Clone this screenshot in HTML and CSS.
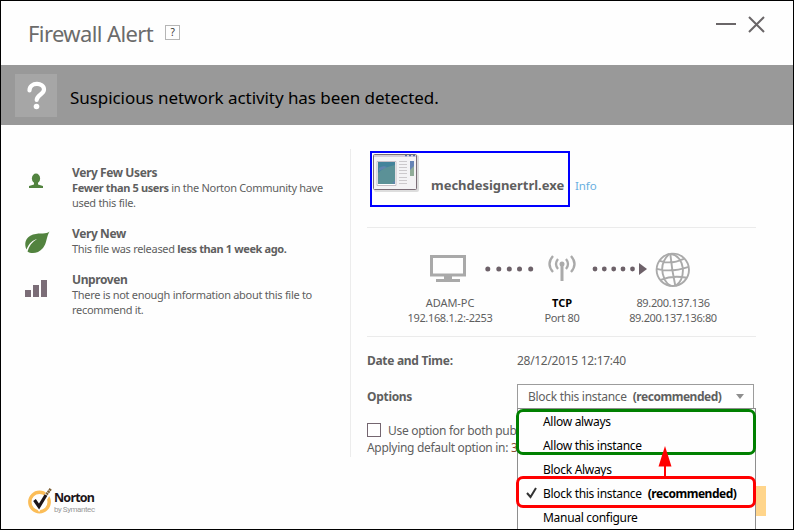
FILE: index.html
```html
<!DOCTYPE html>
<html lang="en">
<head>
<meta charset="utf-8">
<title>Firewall Alert</title>
<link rel="stylesheet" href="styles.css">
</head>
<body>
<main class="window">
  <header class="titlebar">
    <h1 class="title">Firewall Alert</h1>
    <span class="help">?</span>
    <svg class="controls" width="50" height="20" viewBox="0 0 50 20"><path d="M0 9h20" stroke="#6a6668" stroke-width="2"/><path d="M33 2l15 15M48 2l-15 15" stroke="#6a6668" stroke-width="2"/></svg>
  </header>
  <section class="banner">
    <div class="banner-icon"><svg width="42" height="43" viewBox="0 0 42 43"><path d="M14.500 16.500C14.500 7.800 29 7.800 29 15.500C29 20.500 22 20.500 21.700 26" fill="none" stroke="#fff" stroke-width="4.200" stroke-linecap="round"/><circle cx="21.500" cy="32.500" r="2.800" fill="#fff"/></svg></div>
    <p class="banner-text">Suspicious network activity has been detected.</p>
  </section>
  <div class="content">
    <section class="left">
      <article class="fact">
        <svg class="fact-icon" width="26" height="45" viewBox="0 0 26 45"><ellipse cx="12" cy="13.500" rx="4.100" ry="5" fill="#52833f"/><path d="M10 17h4v2.500l5 1.600V23H5v-1.900l5-1.600z" fill="#52833f"/></svg>
        <div><h2>Very Few Users</h2><p><b>Fewer than 5 users</b> in the Norton Community have<br>used this file.</p></div>
      </article>
      <article class="fact">
        <svg class="fact-icon" width="26" height="30" viewBox="0 0 26 30"><path d="M25.500 5.500C22 8.500 17 6.500 9 8.500C1 11 0 18 2.500 23.500C5 17 9 14 13 13C8 16 5 20 3.500 25.500C7 28 14 28 19 22C23 17 22 12 25.500 5.500z" fill="#52833f"/></svg>
        <div><h2>Very New</h2><p>This file was released <b>less than 1 week ago.</b></p></div>
      </article>
      <article class="fact">
        <svg class="fact-icon" width="26" height="45" viewBox="0 0 26 45"><path d="M1 18h6v7H1zM9 13h6v12H9zM17 8h6v17h-6z" fill="#7b6d77"/></svg>
        <div><h2>Unproven</h2><p>There is not enough information about this file to<br>recommend it.</p></div>
      </article>
    </section>
    <section class="right">
      <div class="program">
        <div class="program-box">
          <svg class="app-icon" width="47" height="39" viewBox="0 0 47 39">
            <rect x="2" y="2" width="45" height="37" rx="2" fill="#ddd"/>
            <rect x="1.500" y="1.500" width="43" height="35" rx="1" fill="#f4f3f5" stroke="#7b6d77"/>
            <path d="M2 2h42v2H2z" fill="#d5d0d8"/><path d="M33 2.500h2m2 0h2m2 0h2" stroke="#536da8" stroke-width="1.500"/>
            <path d="M5 8.500h19v24H5z" fill="#fff" stroke="#c6bfc6"/><path d="M6 9h17v22H6z" fill="#43839b"/><path d="M6 20L12 15l11-3v19H6z" fill="#5b9197"/><path d="M7 15q4-3 8-1l-8 4zM20 30l3-2v3z" fill="#6183af"/>
            <path d="M27 8.500h8m-8 3h8m-8 3h8m-8 3h8m-8 3h8m-8 4h8m-8 3h8m-8 3h8" stroke="#ccc9cc"/><path d="M38 8h4v15h-4z" fill="#91ac98"/><path d="M38 8h4v5l-4 4z" fill="#6684b5"/>
          </svg>
          <strong>mechdesignertrl.exe</strong>
        </div>
        <a class="info">Info</a>
      </div>
      <div class="network">
        <div class="node pc">
          <svg width="40" height="35" viewBox="0 0 40 35"><path d="M1.500 4.500h33v18.500h-33z" fill="none" stroke="#a9a9a9" stroke-width="3"/><path d="M14 24h8v3h8v3H6v-3h8z" fill="#a9a9a9"/></svg>
          <span>ADAM-PC</span><span class="ip">192.168.1.2:-2253</span>
        </div>
        <svg class="dots" width="50" height="14" viewBox="0 0 50 14"><g fill="#6d6169"><circle cx="2.800" cy="7" r="2.500"/><circle cx="13.800" cy="7" r="2.500"/><circle cx="24.300" cy="7" r="2.500"/><circle cx="34.500" cy="7" r="2.500"/><circle cx="45.700" cy="7" r="2.500"/></g></svg>
        <div class="node tcp">
          <svg width="28" height="35" viewBox="0 0 28 35"><circle cx="14" cy="12" r="2.500" fill="#aaa"/><path d="M14 12v17" stroke="#aaa" stroke-width="3"/><path d="M10 7q-4 5 0 10M18 7q4 5 0 10M5 4q-7 8 0 16M23 4q7 8 0 16" fill="none" stroke="#aaa" stroke-width="2.300"/></svg>
          <b>TCP</b><span>Port 80</span>
        </div>
        <svg class="dots arrow-dots" width="56" height="14" viewBox="0 0 56 14"><g fill="#6d6169"><circle cx="3" cy="7" r="2.400"/><circle cx="12.300" cy="7" r="2.400"/><circle cx="21.700" cy="7" r="2.400"/><circle cx="31" cy="7" r="2.400"/><circle cx="40.500" cy="7" r="2.400"/><path d="M47 1l8 6-8 6z"/></g></svg>
        <div class="node remote">
          <svg width="36" height="35" viewBox="0 0 36 35"><g fill="none" stroke="#aaa" stroke-width="1.900" transform="translate(.8 .3)"><circle cx="17" cy="17.500" r="16.200"/><path d="M14.500 1.500Q16 17.500 19.500 33.500M13.500 1.500Q2 12.500 9 27.500Q11 31.500 15 33.500M15 1.500Q25 3.500 27 15.500Q28 27.500 20 33.500M4 8.500Q15 12.500 28 6.500M1 16.500Q15 20.500 33 14.500M5 27.500Q17 22.500 31 25.500"/></g></svg>
          <span class="ip">89.200.137.136</span><span class="ip">89.200.137.136:80</span>
        </div>
      </div>
      <div class="row date"><b>Date and Time:</b><span>28/12/2015 12:17:40</span></div>
      <div class="row options"><b>Options</b>
        <div class="select"><span>Block this instance</span><b>(recommended)</b><i class="caret"></i>
          <div class="menu">
            <div class="item">Allow always</div>
            <div class="item">Allow this instance</div>
            <div class="item">Block Always</div>
            <div class="item"><svg class="check" width="12" height="12" viewBox="0 0 12 12"><path d="M1 6l3.500 4L10 1" fill="none" stroke="#333" stroke-width="2"/></svg><span>Block this instance</span><b>(recommended)</b></div>
            <div class="item">Manual configure</div>
            <div class="mark green"></div>
            <svg class="pointer" width="14" height="32" viewBox="0 0 14 32"><path d="M7 0L13.500 20.500H.5z" fill="red"/><path d="M7 20v12" stroke="red" stroke-width="2"/></svg>
            <div class="mark red"></div>
          </div>
        </div>
      </div>
      <div class="choice"><i class="box"></i><span>Use option for both pub</span></div>
      <p class="timer">Applying default option in: <span class="count">3</span></p>
    </section>
  </div>
  <footer class="footer">
    <svg class="norton" width="28" height="28" viewBox="0 0 28 28"><circle cx="11.500" cy="16" r="9.700" fill="#fff" stroke="#fbbd58" stroke-width="3.400"/><path d="M6 14.500l5 7L23 3" fill="none" stroke="#fff" stroke-width="5"/><path d="M6.500 14l4.500 6.500L18 9" fill="none" stroke="#1d1519" stroke-width="3.200"/><path d="M18.500 8.500l4.500-6" stroke="#7f6238" stroke-width="2.800" stroke-dasharray="2 .5"/></svg>
    <div class="brand"><strong>Norton</strong><span>by Symantec</span></div>
    <div class="ok"></div>
  </footer>
</main>
</body>
</html>
```
FILE: styles.css
```css
* { box-sizing: border-box; }
body { margin: 0; background: #fefefe; }
h1, h2, p { margin: 0; font-weight: normal; }
.window { width: 794px; height: 530px; overflow: hidden; border: 1px solid #000; display: flex; flex-direction: column; font: 11px/15px "Noto Sans", "Open Sans", sans-serif; letter-spacing: -.3px; color: #5f5f5f; white-space: nowrap; }
.titlebar { height: 64px; flex: none; display: flex; align-items: center; padding: 0 27px; }
.title { font-size: 22px; line-height: 30px; letter-spacing: -.6px; color: #6b6b6b; width: 126px; }
.help { width: 15px; height: 15px; margin: -1px 0 0 11px; border: 1px solid #b5b5b5; text-align: center; line-height: 13px; font-size: 10px; color: #333; }
.controls { margin: -17px 0 0 auto; }
.banner { height: 60px; flex: none; background: #999; display: flex; align-items: center; padding-left: 14px; color: #000; }
.banner-icon { width: 42px; height: 43px; background: #a6a6a6; }
.banner-icon svg, .node svg { display: block; }
.banner-text { margin-left: 13px; padding-top: 5px; font-size: 17px; line-height: 24px; letter-spacing: -.06px; }
.content { height: 332px; flex: none; display: flex; padding: 24px 37px 0 27px; }
.left { width: 323px; flex: none; border-right: 1px solid #ececec; padding-top: 16px; display: flex; flex-direction: column; gap: 16px; height: 308px; }
.fact { display: flex; gap: 18px; }
.fact-icon { margin-left: -4px; margin-right: 4px; }
.fact h2 { font-size: 12px; font-weight: bold; line-height: 15px; letter-spacing: -.4px; }
.fact b { letter-spacing: -.38px; }
.right { width: 389px; margin-left: 16px; }
.program { height: 79px; display: flex; border-bottom: 1px solid #ebebeb; padding: 2px 0 0 3px; }
.program-box { width: 200px; height: 56px; border: 2px solid #00f; display: flex; }
.program-box strong { margin: 23px 0 0 12px; font-size: 13px; line-height: 18px; letter-spacing: -.03px; }
.info { margin: 27px 0 0 5px; color: #69afe0; font-size: 11.5px; letter-spacing: -.1px; }
.network { height: 109px; display: flex; padding-top: 24px; border-bottom: 1px solid #ebebeb; }
.node { display: flex; flex-direction: column; align-items: center; width: 90px; }
.node svg { margin-bottom: 8px; }
.node > :nth-child(2) { letter-spacing: -.05px; }
.node > .ip { letter-spacing: -.35px; }
.pc { margin-left: 38px; }
.dots { flex: none; margin: 10px 0 0 -10px; }
.tcp { margin-left: -18px; flex: none; }
.tcp b { color: #000; }
.arrow-dots { margin-left: -15px; }
.remote { margin-left: -20px; flex: none; }
.row { display: flex; align-items: center; font-size: 12px; }
.row > b { width: 150px; }
.date { height: 47px; }
.options { height: 25px; }
.select { position: relative; width: 237px; height: 25px; border: 1px solid #9c9c9c; display: flex; align-items: center; padding: 0 9px 0 10px; background: #fff; }
.select b { margin-left: 6px; letter-spacing: -.47px; }
.caret { margin-left: auto; border: 4px solid transparent; border-top: 5px solid #8f8f8f; border-bottom: 0; }
.menu { position: absolute; left: -1px; top: 23px; width: 239px; height: 130px; border: 1px solid #8e8e8e; background: #fefefe; color: #000; z-index: 2; }
.item { height: 24px; display: flex; align-items: center; padding-left: 25px; }
.check { margin-left: -17px; margin-right: 5px; }
.mark { position: absolute; left: -2px; width: 240px; border: 3px solid green; border-radius: 7px; }
.green { top: 0; height: 46px; }
.red { top: 67px; height: 32px; border-color: red; }
.pointer { position: absolute; left: 140px; top: 37px; }
.choice { display: flex; align-items: center; height: 20px; margin-top: 11px; font-size: 12px; }
.box { width: 14px; height: 14px; border: 1px solid #746670; margin-right: 7px; background: #fff; }
.timer { font-size: 12px; }
.count { color: #8a4b32; }
.footer { flex: 1; display: flex; padding: 29px 27px 0 27px; }
.brand { display: flex; flex-direction: column; margin-left: -2px; padding-top: 5px; font: 8px/9px Roboto, sans-serif; letter-spacing: -.45px; color: #999; }
.brand strong { font: bold 12.5px/14px "Noto Sans", sans-serif; letter-spacing: -.8px; color: #1d1519; }
.ok { width: 60px; height: 30px; margin-left: auto; background: #ffd58b; }
```
